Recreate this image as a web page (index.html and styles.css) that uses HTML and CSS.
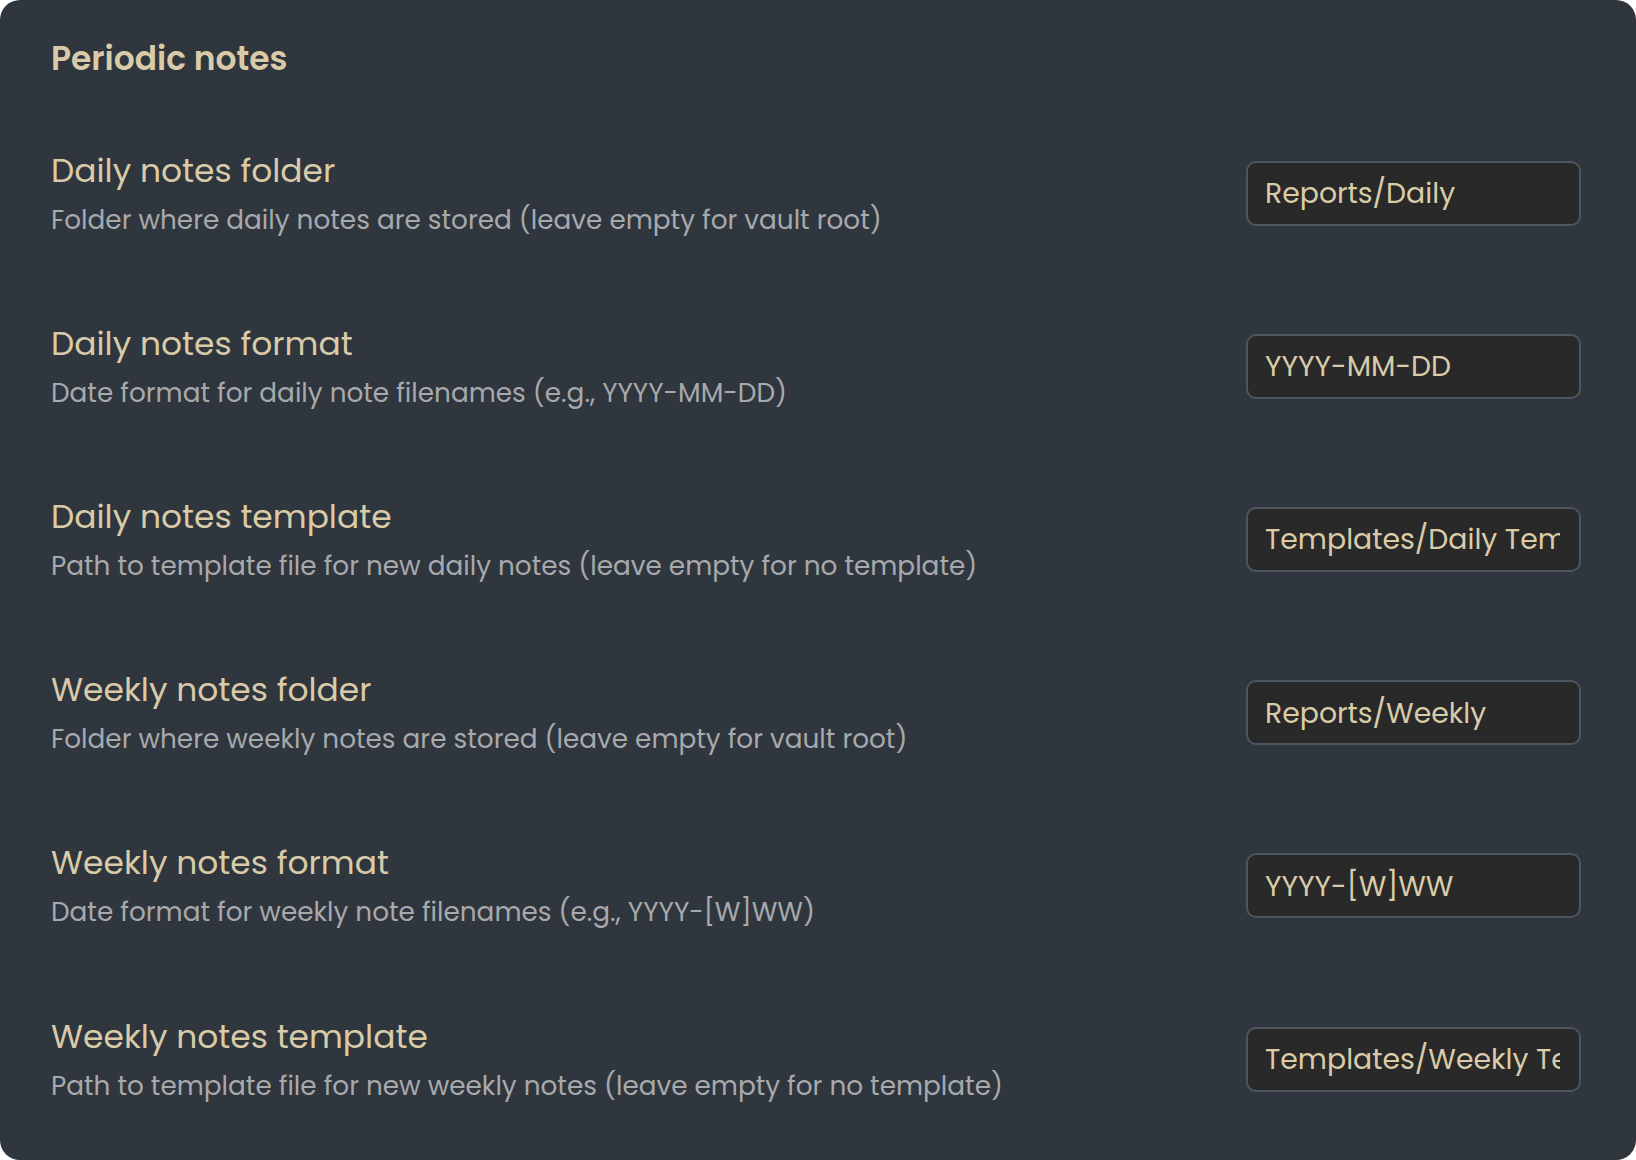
FILE: index.html
```html
<!DOCTYPE html>
<html lang="en">
<head>
<meta charset="utf-8">
<title>Periodic notes</title>
<link rel="stylesheet" href="styles.css">
</head>
<body>
<div class="card">
  <h3 class="section-title">Periodic notes</h3>

  <div class="setting-item">
    <div class="setting-info">
      <div class="setting-name">Daily notes folder</div>
      <div class="setting-desc">Folder where daily notes are stored (leave empty for vault root)</div>
    </div>
    <div class="text-input"><div class="text-value">Reports/Daily</div></div>
  </div>

  <div class="setting-item">
    <div class="setting-info">
      <div class="setting-name">Daily notes format</div>
      <div class="setting-desc">Date format for daily note filenames (e.g., YYYY-MM-DD)</div>
    </div>
    <div class="text-input"><div class="text-value">YYYY-MM-DD</div></div>
  </div>

  <div class="setting-item">
    <div class="setting-info">
      <div class="setting-name">Daily notes template</div>
      <div class="setting-desc">Path to template file for new daily notes (leave empty for no template)</div>
    </div>
    <div class="text-input"><div class="text-value">Templates/Daily Template.md</div></div>
  </div>

  <div class="setting-item">
    <div class="setting-info">
      <div class="setting-name">Weekly notes folder</div>
      <div class="setting-desc">Folder where weekly notes are stored (leave empty for vault root)</div>
    </div>
    <div class="text-input"><div class="text-value">Reports/Weekly</div></div>
  </div>

  <div class="setting-item">
    <div class="setting-info">
      <div class="setting-name">Weekly notes format</div>
      <div class="setting-desc">Date format for weekly note filenames (e.g., YYYY-[W]WW)</div>
    </div>
    <div class="text-input"><div class="text-value">YYYY-[W]WW</div></div>
  </div>

  <div class="setting-item">
    <div class="setting-info">
      <div class="setting-name">Weekly notes template</div>
      <div class="setting-desc">Path to template file for new weekly notes (leave empty for no template)</div>
    </div>
    <div class="text-input"><div class="text-value">Templates/Weekly Template.md</div></div>
  </div>
</div>
</body>
</html>
```
FILE: styles.css
```css
html, body {
  margin: 0;
  padding: 0;
  background: #ffffff;
}

body {
  font-family: "Poppins", "DejaVu Sans", sans-serif;
}

.card {
  box-sizing: border-box;
  width: 1636px;
  height: 1160px;
  background: #2f363e;
  border-radius: 20px;
  padding: 39px 55px 0 49px;
  overflow: hidden;
}

.section-title {
  margin: 0 0 27.5px 2px;
  font-size: 32.9px;
  line-height: 40px;
  font-weight: 600;
  color: #d9cba8;
}

.setting-item {
  display: flex;
  align-items: center;
  justify-content: space-between;
  gap: 40px;
  padding: 42.1px 0;
}

.setting-info {
  display: flex;
  flex-direction: column;
  min-width: 0;
  padding-left: 2px;
}

.setting-name {
  font-size: 32.9px;
  line-height: 44px;
  font-weight: 400;
  color: #d9cba8;
}

.setting-desc {
  margin-top: 9px;
  font-size: 26.3px;
  line-height: 36px;
  color: #a7a9ac;
}

.text-input {
  box-sizing: border-box;
  flex: none;
  width: 335px;
  min-width: 0;
  height: 65px;
  display: flex;
  align-items: center;
  padding: 0 19px 0 17px;
  background: #292929;
  border: 2px solid #4c5660;
  border-radius: 10px;
  overflow: hidden;
}

.text-value {
  flex: 1 1 auto;
  min-width: 0;
  overflow: hidden;
  white-space: nowrap;
  font-size: 28.3px;
  line-height: 40px;
  color: #dacca9;
}
```
